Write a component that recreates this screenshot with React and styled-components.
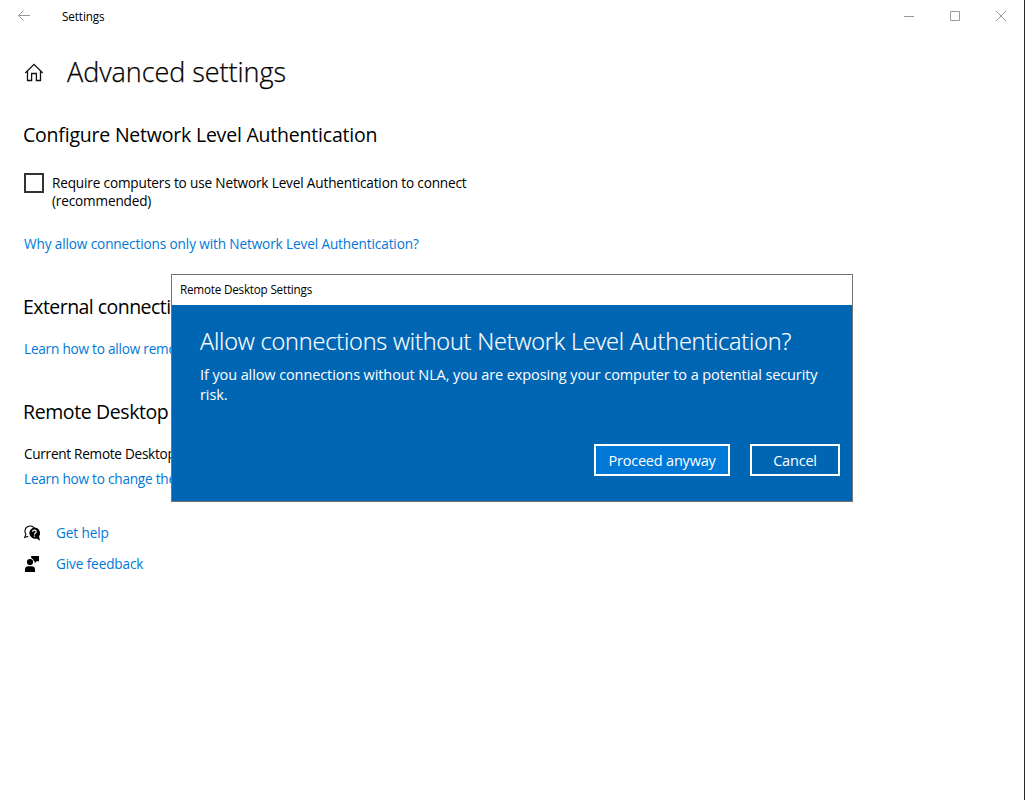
import React from "react";
import styled, { createGlobalStyle } from "styled-components";

const GlobalStyle = createGlobalStyle`
  *, *::before, *::after { box-sizing: border-box; }
  body {
    margin: 0;
    background: #fff;
    font-family: "Open Sans", "Noto Sans", sans-serif;
    color: #000;
  }
  h1, h2, p { margin: 0; font-weight: 400; }
`;

const Window = styled.div`
  position: relative;
  height: 800px;
  overflow: hidden;
  border-right: 1px solid #2b2b2b;
  background: #fff;
`;

const TitleBar = styled.header`
  display: flex;
  align-items: center;
  height: 32px;
  padding-left: 17px;
`;

const TitleText = styled.span`
  flex: 1;
  margin-left: 31px;
  font-size: 11.7px;
  line-height: 16px;
  letter-spacing: -0.1px;
`;

const CaptionButton = styled.button`
  display: flex;
  align-items: center;
  justify-content: center;
  width: 46px;
  height: 32px;
  padding: 0;
  border: 0;
  background: none;
  color: #999;
`;

const Page = styled.main`
  display: flex;
  flex-direction: column;
  align-items: flex-start;
  padding: 20px 24px 0;
`;

const PageHeader = styled.div`
  display: flex;
  align-items: center;
  gap: 23px;
  height: 40px;
`;

const PageTitle = styled.h1`
  font-size: 27px;
  font-weight: 300;
  line-height: 40px;
  letter-spacing: -0.05px;
  -webkit-text-stroke: 0.25px currentColor;
`;

const Section = styled.section`
  display: flex;
  flex-direction: column;
  align-items: flex-start;
  margin-top: ${(p) => p.$top}px;
`;

const SectionTitle = styled.h2`
  margin: 0 0 ${(p) => p.$gap}px -1px;
  font-size: 19.5px;
  line-height: 24px;
  letter-spacing: ${(p) => p.$track ?? -0.21}px;
`;

const CheckRow = styled.label`
  display: flex;
  gap: 8px;
  width: 460px;
  margin-bottom: 25px;
`;

const CheckBox = styled.span`
  flex: none;
  width: 20px;
  height: 20px;
  margin-top: -1px;
  border: 2px solid #333;
`;

const Body = styled.p`
  font-size: 13.6px;
  line-height: 18px;
  letter-spacing: ${(p) => p.$track ?? -0.16}px;
  white-space: ${(p) => (p.$wrap ? "normal" : "nowrap")};
`;

const Link = styled.a`
  color: #0078d7;
  font-size: 13.6px;
  line-height: 18px;
  letter-spacing: ${(p) => p.$track ?? -0.12}px;
  white-space: nowrap;
`;

const PortInfo = styled.div`
  display: flex;
  flex-direction: column;
  gap: 7px;
`;

const SupportLinks = styled.nav`
  display: flex;
  flex-direction: column;
  gap: 13px;
  margin-top: 36px;
`;

const SupportItem = styled.div`
  display: flex;
  align-items: center;
  gap: 16px;
  height: 18px;
`;

const Dialog = styled.div`
  position: absolute;
  left: 171px;
  top: 274px;
  display: flex;
  flex-direction: column;
  width: 682px;
  height: 228px;
  border: 1px solid #737373;
  background: #0066b4;
  color: #fff;
`;

const DialogBar = styled.div`
  height: 30px;
  padding-left: 8px;
  background: #fff;
  color: #000;
  font-size: 11.7px;
  line-height: 28px;
  letter-spacing: -0.21px;
`;

const DialogContent = styled.div`
  flex: 1;
  display: flex;
  flex-direction: column;
  padding: 20px 12px 25px 28px;
`;

const DialogTitle = styled.h1`
  font-size: 23.5px;
  font-weight: 300;
  line-height: 32px;
  letter-spacing: -0.18px;
  white-space: nowrap;
  -webkit-text-stroke: 0.2px currentColor;
`;

const DialogText = styled.p`
  width: 630px;
  margin-top: 8px;
  font-size: 14.5px;
  line-height: 20px;
  letter-spacing: -0.1px;
`;

const DialogActions = styled.div`
  display: flex;
  justify-content: flex-end;
  gap: 20px;
  margin-top: auto;
`;

const DialogButton = styled.button`
  width: ${(p) => p.$width}px;
  height: 32px;
  padding: 1px 0 0;
  border: 2px solid #fff;
  background: ${(p) => (p.$primary ? "#0078d7" : "transparent")};
  color: #fff;
  font-family: inherit;
  font-size: 14.5px;
  line-height: 27px;
  letter-spacing: -0.2px;
`;

const BackIcon = () => (
  <svg width="14" height="12" viewBox="0 0 14 12" fill="none" stroke="#999" strokeWidth="1">
    <path d="M1.5 5.5H13M6.5.5l-5 5 5 5" />
  </svg>
);

const HomeIcon = () => (
  <svg width="20" height="20" viewBox="0 0 20 20" fill="none" stroke="#111" strokeWidth="1.3">
    <path d="M1.3 11 10 2.4l8.7 8.6M3.5 9v9.5h4.1v-7h4.8v7h4.1V9" />
  </svg>
);

const HelpIcon = () => (
  <svg width="16" height="16" viewBox="0 0 16 16">
    <path
      d="M10.4 3.2A5.2 5.2 0 1 0 1.9 9.2L.7 12.4l3.6-1.2"
      fill="none"
      stroke="#000"
      strokeWidth="1.1"
    />
    <path d="M10.4 2.6a5.6 5.6 0 0 1 4.7 8.7L16 15.8l-3.3-2.3a5.6 5.6 0 1 1-2.3-10.9Z" />
    <path d="M8.6 6.7c0-2.2 3.6-2.1 3.6 0 0 1.3-1.7 1.3-1.7 2.8M10.5 10.4v1.3" fill="none" stroke="#fff" strokeWidth="1.2" />
  </svg>
);

const FeedbackIcon = () => (
  <svg width="16" height="16" viewBox="0 0 16 16">
    <circle cx="6" cy="6" r="3.1" />
    <path d="M1 16v-2.4A3.4 3.4 0 0 1 4.4 10.2h3.2a3.4 3.4 0 0 1 3.4 3.4V16Z" />
    <path d="M7.2 0H15v5.2h-2.4l-1.9 2V5.2H10A4.2 4.2 0 0 0 7.2 2Z" />
  </svg>
);

const MinimizeIcon = () => (
  <svg width="10" height="10" viewBox="0 0 10 10" stroke="currentColor">
    <path d="M0 5.5h10" />
  </svg>
);

const MaximizeIcon = () => (
  <svg width="10" height="10" viewBox="0 0 10 10" fill="none" stroke="currentColor">
    <path d="M.5.5h9v9h-9z" />
  </svg>
);

const CloseIcon = () => (
  <svg width="10" height="10" viewBox="0 0 10 10" stroke="currentColor">
    <path d="m0 0 10 10M10 0 0 10" />
  </svg>
);

export default function App() {
  return (
    <>
      <GlobalStyle />
      <Window>
        <TitleBar>
          <BackIcon />
          <TitleText>Settings</TitleText>
          <CaptionButton aria-label="Minimize"><MinimizeIcon /></CaptionButton>
          <CaptionButton aria-label="Maximize"><MaximizeIcon /></CaptionButton>
          <CaptionButton aria-label="Close"><CloseIcon /></CaptionButton>
        </TitleBar>
        <Page>
          <PageHeader>
            <HomeIcon />
            <PageTitle>Advanced settings</PageTitle>
          </PageHeader>

          <Section $top={31}>
            <SectionTitle $gap={27}>Configure Network Level Authentication</SectionTitle>
            <CheckRow>
              <CheckBox />
              <Body $wrap>
                Require computers to use Network Level Authentication to connect (recommended)
              </Body>
            </CheckRow>
            <Link>Why allow connections only with Network Level Authentication?</Link>
          </Section>

          <Section $top={42}>
            <SectionTitle $gap={21} $track={-0.55}>External connections</SectionTitle>
            <Link $track={-0.22}>Learn how to allow remote connections</Link>
          </Section>

          <Section $top={42}>
            <SectionTitle $gap={21} $track={-0.4}>Remote Desktop port</SectionTitle>
            <PortInfo>
              <Body $track={-0.28}>Current Remote Desktop port</Body>
              <Link $track={-0.22}>Learn how to change the port</Link>
            </PortInfo>
          </Section>

          <SupportLinks>
            <SupportItem>
              <HelpIcon />
              <Link>Get help</Link>
            </SupportItem>
            <SupportItem>
              <FeedbackIcon />
              <Link>Give feedback</Link>
            </SupportItem>
          </SupportLinks>
        </Page>

        <Dialog role="dialog">
          <DialogBar>Remote Desktop Settings</DialogBar>
          <DialogContent>
            <DialogTitle>Allow connections without Network Level Authentication?</DialogTitle>
            <DialogText>
              If you allow connections without NLA, you are exposing your computer to a potential security risk.
            </DialogText>
            <DialogActions>
              <DialogButton $primary $width={136}>Proceed anyway</DialogButton>
              <DialogButton $width={90}>Cancel</DialogButton>
            </DialogActions>
          </DialogContent>
        </Dialog>
      </Window>
    </>
  );
}
